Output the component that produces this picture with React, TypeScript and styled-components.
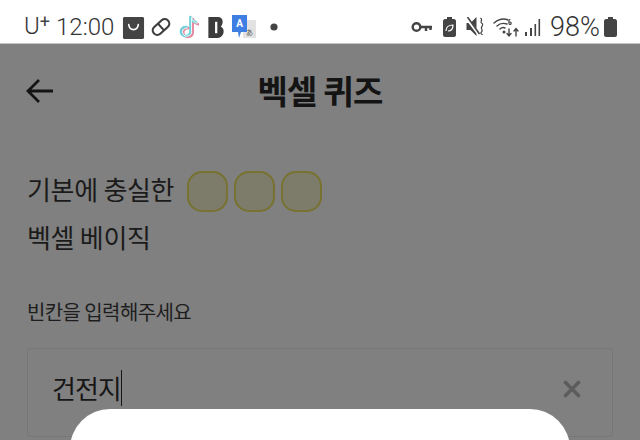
import React from "react";
import styled, { createGlobalStyle } from "styled-components";

const Global = createGlobalStyle`
  html, body { margin: 0; padding: 0; width: 640px; height: 440px; overflow: hidden; background: #808080; }
  * { box-sizing: border-box; }
`;
const KR = `"Noto Sans CJK KR", "Noto Sans", sans-serif`;

const Screen = styled.div`
  position: relative; width: 640px; height: 440px; overflow: hidden;
  background: #808080; font-family: ${KR}; color: #161616;
  display: flex; flex-direction: column;
`;
const StatusBar = styled.div`
  height: 44px; flex: none; background: #fff; border-bottom: 1px solid #c4c4c4;
  display: flex; align-items: center; justify-content: space-between;
  padding: 11px 23px 0 24px; color: #4a4a4a;
  font-family: Roboto, "Liberation Sans", sans-serif;
`;
const StatusGroup = styled.div`
  display: flex; align-items: center;
`;
const StatusText = styled.span<{ $size?: number; $ml?: number }>`
  font-size: ${p => p.$size ?? 24}px; line-height: 28px; font-weight: 300; color: #333; white-space: nowrap;
  margin-left: ${p => p.$ml ?? 0}px;
`;
const Sup = styled.span`
  font-size: 18px; position: relative; top: -6px; font-weight: 400; margin-right: 6px; color: #444;
`;
const Icon = styled.svg<{ $ml?: number }>`
  display: block; flex: none; margin-left: ${p => p.$ml ?? 0}px;
`;
const Header = styled.div`
  height: 92px; flex: none; display: flex; align-items: center; position: relative;
  justify-content: center;
`;
const BackButton = styled.div`
  position: absolute; left: 25px; top: 32px; width: 30px; height: 30px;
`;
const Title = styled.h1`
  margin: 0; font-size: 33px; line-height: 40px; font-weight: 700; letter-spacing: -0.8px; color: #141414;
`;
const Content = styled.div`
  padding: 29px 27px 0; display: flex; flex-direction: column;
`;
const SentenceRow = styled.div`
  display: flex; align-items: center; height: 48px;
`;
const Sentence = styled.span`
  font-size: 26px; line-height: 48px; letter-spacing: -0.3px; color: #1b1b1b; white-space: nowrap;
`;
const Blanks = styled.div`
  display: flex; gap: 6px; margin-left: 13px; position: relative; top: 2px;
`;
const Blank = styled.div`
  width: 41px; height: 41px; border-radius: 15px; background: #7d7c6b; border: 2px solid #77722f;
`;
const Hint = styled.p`
  margin: 36px 0 0; font-size: 20px; line-height: 30px; letter-spacing: -0.6px; color: #1d1d1d;
`;
const InputBox = styled.div`
  margin-top: 21px; width: 586px; height: 89px; border: 1px solid #767676; border-radius: 3px;
  display: flex; align-items: flex-start; justify-content: space-between; padding: 21px 31px 0 24px;
`;
const InputText = styled.span`
  font-size: 26px; line-height: 36px; letter-spacing: -1px; color: #171717;
  border-right: 1.5px solid #171717; height: 36px; display: flex; align-items: center;
`;
const Clear = styled.svg`
  display: block; margin-top: 10px;
`;
const Sheet = styled.div`
  position: absolute; left: 70px; top: 409px; width: 500px; height: 120px;
  background: #fff; border-radius: 40px;
`;

export default function App() {
  return (
    <Screen>
      <Global />
      <StatusBar>
        <StatusGroup>
          <StatusText>U<Sup>+</Sup></StatusText>
          <StatusText>12:00</StatusText>
          <Icon $ml={8} width="23" height="23" viewBox="0 0 24 24">
            <path d="M2 1h20l1 1v21l-1 1H2l-1-1V2z" fill="#444" />
            <path d="M7 9c1 7 9 7 10 0" fill="none" stroke="#fff" strokeWidth="1.7" strokeLinecap="round" />
          </Icon>
          <Icon $ml={6} width="20" height="22" viewBox="0 0 22 24">
            <g transform="rotate(-42 11 12)" fill="none" stroke="#3e3e3e" strokeWidth="2.4">
              <rect x="0.5" y="7" width="21" height="10" rx="5" />
              <path d="M11 7v10" />
            </g>
          </Icon>
          <Icon $ml={7} width="21" height="25" viewBox="0 0 22 26" fill="none" strokeWidth="2.6" strokeLinecap="round">
            <path d="M15.5 4v14c0 6.5-10 6.5-10 0 0-3 3-5 6-4.5M15.5 4c1 3 3 5 6 5.5" stroke="#e58aa0" />
            <path d="M13 2v15c0 6.5-10 6.5-10 0 0-3 3-5 6-4.5M13 2c1 3 3 5 6 5.5" stroke="#6fd0d8" />
            <path d="M14.2 3v14.5c0 6-9.5 6-9.5 0 0-2.5 2.5-4.5 5-4M14.2 3c1 3 3 5 6 5.5" stroke="#fff" strokeWidth="0.9" />
          </Icon>
          <Icon $ml={9} width="16" height="21" viewBox="0 0 16 22">
            <path d="M0 0h10c3 0 5 2 5 5 0 2-1 4-2 5 2 1 3 3 3 5 0 4-3 7-6 7H0z" fill="#3c3c3c" />
            <rect x="7" y="5" width="2.4" height="12" fill="#fff" />
          </Icon>
          <Icon $ml={8} width="24" height="24" viewBox="0 0 24 24">
            <rect x="11" y="5" width="13" height="18" fill="#e2e2e2" />
            <path d="M0 0h15v17H9l-2 6-1-6H0z" fill="#3f7fe3" />
            <text x="7.5" y="12" textAnchor="middle" fontSize="10" fontWeight="700" fill="#fff" fontFamily="Roboto, sans-serif">A</text>
            <text x="17.5" y="20" textAnchor="middle" fontSize="7" fill="#555" fontFamily='"Noto Sans CJK JP", sans-serif'>あ</text>
          </Icon>
          <Icon $ml={14} width="8" height="8" viewBox="0 0 8 8"><circle cx="4" cy="4" r="3.6" fill="#444" /></Icon>
        </StatusGroup>
        <StatusGroup>
          <Icon width="22" height="12" viewBox="0 0 22 12" fill="none">
            <circle cx="5.5" cy="6" r="3.8" stroke="#444" strokeWidth="2.4" />
            <path d="M9 6h12M15 6v4M19.5 6v3" stroke="#444" strokeWidth="2.4" />
          </Icon>
          <Icon $ml={10} width="13" height="20" viewBox="0 0 13 20">
            <path d="M4 0h5v2h2c1 0 2 1 2 2v14c0 1-1 2-2 2H2c-1 0-2-1-2-2V4c0-1 1-2 2-2h2z" fill="#444" />
            <path d="M3 14c0-4 3-6 7-6 0 4-2 6-5 6" fill="none" stroke="#fff" strokeWidth="1.2" />
          </Icon>
          <Icon $ml={10} width="19" height="20" viewBox="0 0 18 20">
            <path d="M0 6h4l6-6v19l-6-6H0z" fill="#444" />
            <path d="M0 1l13 17" stroke="#fff" strokeWidth="3" />
            <path d="M1 0l12 17" stroke="#444" strokeWidth="1.6" />
            <path d="M14 1c3 2-1 4 1 5s1 3 0 4 2 3 0 5 1 2 1 3" stroke="#444" strokeWidth="1.2" fill="none" />
          </Icon>
          <Icon $ml={8} width="26" height="21" viewBox="0 0 26 21" fill="none" stroke="#444" strokeWidth="1.4" strokeLinecap="round">
            <path d="M1 6c4-4 10-5 14-3" />
            <path d="M4 9c3-3 7-3 10-2" />
            <path d="M7 12c1-1 3-2 5-1" />
            <circle cx="11" cy="15" r="0.8" fill="#444" />
            <path d="M17 2.5c-1.5 0-1.5 5 0 5s1.6-2.5 0-2.5" strokeWidth="1.2" />
            <path d="M16 12v7M14 16.5l2 2.5 2-2.5" />
            <path d="M23 19v-7M21 14l2-2.5 2 2.5" />
          </Icon>
          <Icon $ml={6} width="16" height="17" viewBox="0 0 16 17" fill="#444">
            <rect x="0" y="13" width="2" height="4" />
            <rect x="5" y="9" width="2" height="8" />
            <rect x="9.5" y="5" width="1.6" height="12" />
            <rect x="13.5" y="0" width="1.6" height="17" />
          </Icon>
          <StatusText $size={27} $ml={9}>98%</StatusText>
          <Icon $ml={4} width="13" height="20" viewBox="0 0 13 20">
            <path d="M4 0h5v2h2c1 0 2 1 2 2v14c0 1-1 2-2 2H2c-1 0-2-1-2-2V4c0-1 1-2 2-2h2z" fill="#444" />
          </Icon>
        </StatusGroup>
      </StatusBar>
      <Header>
        <BackButton>
          <svg width="30" height="30" viewBox="0 0 30 30" fill="none" stroke="#141414" strokeWidth="2.8">
            <path d="M28 15H3M14 4L3 15l11 11" />
          </svg>
        </BackButton>
        <Title>벡셀 퀴즈</Title>
      </Header>
      <Content>
        <SentenceRow>
          <Sentence>기본에 충실한</Sentence>
          <Blanks><Blank /><Blank /><Blank /></Blanks>
        </SentenceRow>
        <SentenceRow><Sentence>벡셀 베이직</Sentence></SentenceRow>
        <Hint>빈칸을 입력해주세요</Hint>
        <InputBox>
          <InputText>건전지</InputText>
          <Clear width="18" height="18" viewBox="0 0 18 18" stroke="#5c5c5c" strokeWidth="3.6" strokeLinecap="round">
            <path d="M2.5 2.5l13 13M15.5 2.5l-13 13" />
          </Clear>
        </InputBox>
      </Content>
      <Sheet />
    </Screen>
  );
}
